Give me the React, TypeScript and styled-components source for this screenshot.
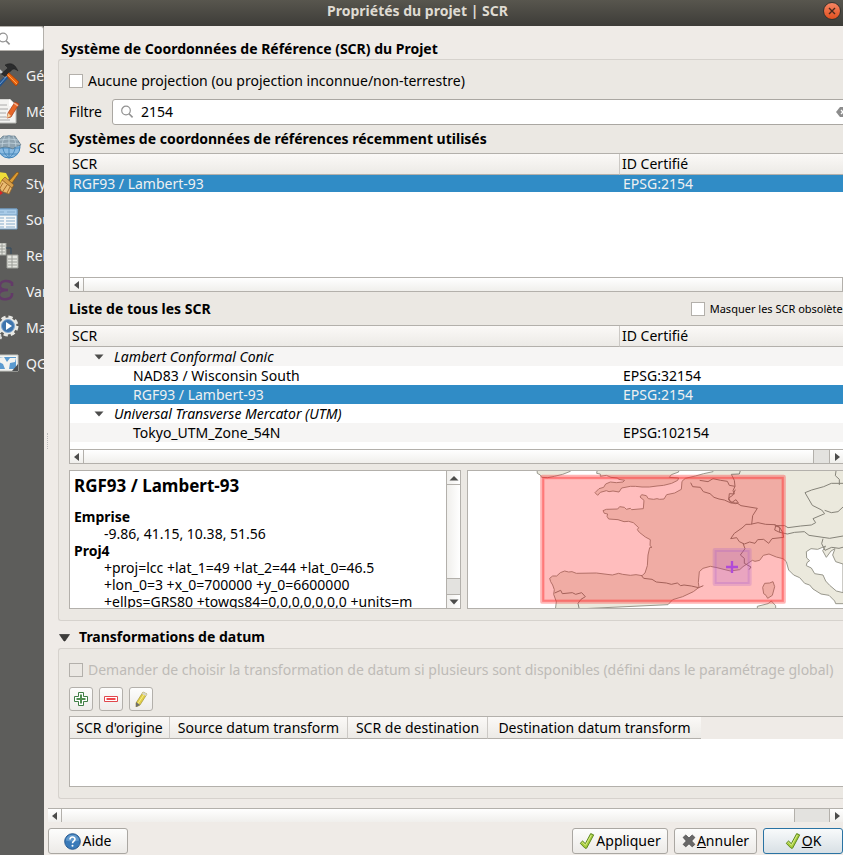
import React from "react";
import styled, { createGlobalStyle, css } from "styled-components";

const line = "#b3b0ab";
const blue = "#308cc6";

const GlobalStyle = createGlobalStyle`
  *, *::before, *::after { box-sizing: border-box; }
  body { margin: 0; }
  body, button, input, table {
    font-family: "Noto Sans", "Open Sans", sans-serif;
    font-size: 14px;
    line-height: 20px;
    color: #000;
  }
  svg { display: block; flex: none; }
`;

const Window = styled.div`
  display: flex;
  flex-direction: column;
  min-height: 100vh;
  background: #efebe7;
  overflow: hidden;
`;

const TitleBar = styled.header`
  display: flex;
  align-items: center;
  height: 26px;
  padding: 0 2px 4px 12px;
  background: linear-gradient(#58564e, #3d3c38);
  color: #dfdbd2;
`;

const WindowTitle = styled.h1`
  flex: 1;
  margin: 0;
  font-size: 14px;
  line-height: 20px;
  text-align: center;
`;

const CloseButton = styled.button`
  display: grid;
  place-items: center;
  width: 18px;
  height: 18px;
  padding: 0;
  border: 1px solid #34332f;
  border-radius: 50%;
  background: linear-gradient(#f58563, #e2501f);
`;

const Body = styled.div`
  display: flex;
  flex: 1;
`;

const Sidebar = styled.nav`
  flex: none;
  width: 44px;
  overflow: hidden;
  background: #5d5d5b;
`;

const SideSearch = styled.label`
  display: flex;
  align-items: center;
  height: 25px;
  margin: 0 0 6px -3px;
  border: 1px solid ${line};
  border-left: 0;
  border-radius: 0 3px 3px 0;
  background: #fff;
`;

const BareInput = styled.input`
  flex: 1;
  min-width: 0;
  padding: 0;
  border: 0;
  outline: 0;
  background: transparent;
  font-size: 14px;
`;

const SideItem = styled.button<{ $active?: boolean }>`
  display: flex;
  align-items: center;
  gap: 4px;
  width: 100%;
  height: 36px;
  padding: 2px 0 0;
  border: 0;
  background: ${(p) => (p.$active ? "#efebe7" : "transparent")};
  color: ${(p) => (p.$active ? "#000" : "#f3f3f3")};
  white-space: nowrap;
  ${(p) => p.$active && css`gap: 7px;`}
`;

const Splitter = styled.div`
  align-self: center;
  flex: none;
  width: 4px;
  height: 16px;
  border-right: 1px dotted #bbb;
`;

const Main = styled.main`
  display: flex;
  flex: 1;
  flex-direction: column;
  min-width: 0;
`;

const ScrollContent = styled.div`
  flex: 1;
  padding-left: 10px;
`;

const SectionTitle = styled.h2<{ $first?: boolean }>`
  display: flex;
  align-items: center;
  gap: 9px;
  margin: 0;
  padding: ${(p) => (p.$first ? "13px 0 0 3px" : "6px 0 1px 1px")};
  font-size: 14px;
  line-height: 20px;
`;

const Group = styled.section`
  display: flex;
  flex-direction: column;
  padding: 11px 0 11px 10px;
  border: 1px solid #d6d2cd;
  border-right: 0;
  border-radius: 3px 0 0 3px;
  background: #ebe8e3;
`;

const CheckLabel = styled.label<{ $disabled?: boolean; $small?: boolean }>`
  display: flex;
  align-items: center;
  gap: 5px;
  overflow: hidden;
  white-space: nowrap;
  color: ${(p) => (p.$disabled ? "#bebbb7" : "#000")};
  ${(p) => p.$small && css`
    margin-right: -5px;
    font-size: 11px;
  `}
`;

const CheckBox = styled.input.attrs({ type: "checkbox" })`
  appearance: none;
  flex: none;
  width: 14px;
  height: 14px;
  margin: 0;
  border: 1px solid ${line};
  background: #fff;
  &:disabled { background: transparent; }
`;

const FilterRow = styled.div`
  display: flex;
  align-items: center;
  gap: 10px;
  margin: 8px 0 4px;
`;

const SearchField = styled.div`
  display: flex;
  flex: 1;
  align-items: center;
  gap: 7px;
  height: 26px;
  margin-right: -6px;
  padding-left: 7px;
  border: 1px solid #aaa7a2;
  border-radius: 3px;
  background: #fff;
`;

const Clear = styled.button`
  padding: 0;
  border: 0;
  background: transparent;
`;

const ListTitle = styled.h3`
  margin: 0;
  font-size: 14px;
  line-height: 20px;
  white-space: nowrap;
`;

const ListHead = styled.div`
  display: flex;
  align-items: center;
  justify-content: space-between;
  padding: 7px 0 6px;
`;

const Pane = styled.div`
  display: flex;
  flex-direction: column;
  min-height: 139px;
  border: 1px solid ${line};
  border-right: 0;
  background: #fff;
`;

const RecentPane = styled(Pane)`
  margin-top: 4px;
`;

const TableArea = styled.div`
  flex: 1;
`;

const Tree = styled.table`
  width: 100%;
  border-collapse: separate;
  border-spacing: 0;
  table-layout: fixed;
  text-align: left;
`;

const HeadCell = styled.th<{ $wide?: boolean }>`
  width: ${(p) => (p.$wide ? "550px" : "auto")};
  height: 21px;
  padding: 0 2px;
  border-right: 1px solid #ccc9c5;
  border-bottom: 1px solid ${line};
  background: linear-gradient(#fbf9f7, #eceae6);
  font-weight: 400;
  line-height: 20px;
  &:last-child { border-right: 0; }
`;

type RowKind = { $selected?: boolean; $alt?: boolean; $compact?: boolean };

const Row = styled.tr<RowKind>`
  height: ${(p) => (p.$compact ? "17px" : "19px")};
  background: ${(p) => (p.$selected ? blue : p.$alt ? "#f6f5f4" : "#fff")};
  color: ${(p) => (p.$selected ? "#eff0f1" : "#000")};
`;

const Cell = styled.td<{ $level?: number }>`
  padding: 0 3px 0 ${(p) => (p.$level === 2 ? "63px" : p.$level === 1 ? "24px" : "3px")};
  line-height: 17px;
  white-space: nowrap;
`;

const Branch = styled.span`
  display: flex;
  align-items: center;
  gap: 10px;
  font-style: italic;
`;

const Bar = styled.div`
  display: flex;
  height: 14px;
  border-top: 1px solid ${line};
  background: linear-gradient(#fff, #f0efec);
`;

const Groove = styled.div<{ $end?: boolean }>`
  flex: 1;
  border-right: ${(p) => (p.$end ? `1px solid ${line}` : "0")};
`;

const Handle = styled.div<{ $wide?: boolean }>`
  width: ${(p) => (p.$wide ? "36px" : "17px")};
  border: solid ${line};
  border-width: 0 1px;
  background: #e3e2df;
`;

const ArrowButton = styled.button<{ $side?: "left" | "up" | "down" }>`
  display: grid;
  place-items: center;
  width: 13px;
  height: 13px;
  padding: 0;
  border: 0 solid ${line};
  background: transparent;
  ${(p) => p.$side === "left" && css`width: 14px; border-right-width: 1px;`}
  ${(p) => p.$side === "up" && css`height: 14px; border-bottom-width: 1px;`}
  ${(p) => p.$side === "down" && css`height: 14px; border-top-width: 1px;`}
`;

const Details = styled.div`
  display: flex;
  gap: 6px;
  height: 139px;
  margin-top: 6px;
`;

const InfoPane = styled.div`
  display: flex;
  flex: 0 0 392px;
  border: 1px solid ${line};
  background: #fff;
  overflow: hidden;
`;

const InfoText = styled.div`
  flex: 1;
  padding: 5px 4px 0;
  overflow: hidden;
  white-space: nowrap;
`;

const InfoTitle = styled.h4`
  margin: 0 0 12px;
  font-size: 17px;
  line-height: 20px;
`;

const Facts = styled.dl`
  margin: 0;
  line-height: 17px;
  dt { font-weight: 700; }
  dd { margin: 0 0 0 30px; }
`;

const VerticalBar = styled.div`
  display: flex;
  flex: none;
  flex-direction: column;
  width: 14px;
  border-left: 1px solid ${line};
  background: linear-gradient(90deg, #f0efec, #fff);
`;

const VerticalHandle = styled.div`
  height: 16px;
  border-top: 1px solid ${line};
  background: #e3e2df;
`;

const MapPane = styled.div`
  flex: 1;
  min-width: 0;
  border: 1px solid ${line};
  border-right: 0;
  background: #fff;
  overflow: hidden;
`;

const Tools = styled.div`
  display: flex;
  gap: 6px;
  margin: 7px 0 5px;
`;

const ToolButton = styled.button`
  display: grid;
  place-items: center;
  width: 24px;
  height: 24px;
  padding: 0;
  border: 1px solid ${line};
  border-radius: 3px;
  background: linear-gradient(#fdfdfc, #eeecea);
`;

const DatumPane = styled.div`
  min-height: 71px;
  border: 1px solid ${line};
  border-right: 0;
  background: linear-gradient(#efebe7 22px, #fff 22px);
`;

const DatumTable = styled.table`
  border-spacing: 0;
  table-layout: fixed;
  width: 631px;
`;

const DatumHead = styled.th<{ $w: number }>`
  width: ${(p) => p.$w}px;
  height: 22px;
  padding: 1px 0 0;
  border-right: 1px solid #ccc9c5;
  border-bottom: 1px solid ${line};
  background: linear-gradient(#fbf9f7, #eceae6);
  font-weight: 400;
  text-align: center;
  white-space: nowrap;
  &:last-child { border-right: 0; }
`;

const BottomBar = styled(Bar)`
  margin: 9px 0 6px;
`;

const Actions = styled.footer`
  display: flex;
  gap: 6px;
  padding-bottom: 1px;
`;

const ActionButton = styled.button<{ $w: number; $primary?: boolean; $first?: boolean }>`
  display: flex;
  align-items: center;
  justify-content: center;
  gap: 1px;
  width: ${(p) => p.$w}px;
  height: 26px;
  margin-right: ${(p) => (p.$first ? "auto" : "0")};
  padding: 0;
  border: 1px solid ${(p) => (p.$primary ? "#2a73a3" : "#aaa7a2")};
  border-radius: 3px;
  background: ${(p) => (p.$primary ? "linear-gradient(#f8fafb, #d8e0e5)" : "linear-gradient(#fdfdfc, #eceae7)")};
`;

const Magnifier = () => (
  <svg width="14" height="14" viewBox="0 0 14 14" fill="none" stroke="#929292" strokeWidth="1.2">
    <circle cx="6" cy="5.5" r="4.3" />
    <path d="M9 8.7 12.6 12.4" strokeWidth="1.6" />
  </svg>
);

const arrows = {
  left: "M7 1v8L2 5z",
  right: "M3 1v8l5-4z",
  up: "M.5 7.500h9L5 3z",
  down: "M.5 2.500h9L5 7.500z",
};

const Arrow = ({ to }: { to: keyof typeof arrows }) => (
  <svg width="10" height="10" viewBox="0 0 10 10"><path d={arrows[to]} fill="#4c4c4b" /></svg>
);

const BigTriangle = () => (
  <svg width="11" height="11" viewBox="0 0 11 11">
    <path d="M.5 2.500h10L6 9H5z" fill="#3e3d3b" stroke="#222" strokeWidth=".6" />
  </svg>
);

const Check = () => (
  <svg width="16" height="18" viewBox="0 0 16 18">
    <path d="M1.2 11.3 3.6 9l2.700 2.700L11.700 1.600l3 1.300L7.600 16.200H6z" fill="#a7cc3b" stroke="#5f8a24" strokeLinejoin="round" />
    <path d="m2.600 11.200 1-.8 2.900 2.900L12.300 3" fill="none" stroke="#d9ee8b" />
  </svg>
);

const CancelMark = () => (
  <svg width="14" height="14" viewBox="0 0 14 14">
    <path d="m3.800 1 3.200 3 3.200-3 2.700 2.400L9.700 7l3.200 3.400-2.700 2.400-3.200-3-3.200 3-2.700-2.400L4.300 7 1.100 3.400z" fill="#686868" stroke="#4c4c4c" strokeWidth=".8" />
  </svg>
);

const HelpMark = () => (
  <svg width="17" height="17" viewBox="0 0 17 17">
    <circle cx="8.5" cy="8.5" r="7.8" fill="#397ab9" stroke="#27598f" />
    <path d="M1.800 7.500a6.800 6.800 0 0 1 13.400 0q-6.500 2-13.400 0" fill="#83b3dd" opacity=".55" />
    <path d="M6 6.500C6 3.200 11 3.200 11 6.200 11 8.200 8.500 8 8.500 10.300" fill="none" stroke="#fff" strokeWidth="1.600" />
    <circle cx="8.500" cy="12.800" r="1" fill="#fff" />
  </svg>
);

const sideIcons: Record<string, React.ReactNode> = {
  general: (
    <>
      <path d="m0 21 9-9 3 2-9 10H0z" fill="#24548e" />
      <path d="m0 5 9 9" stroke="#c8cdd0" strokeWidth="2.500" />
      <path d="m2 22 9-10" stroke="#6f9ed0" />
      <path d="m8 11 3-2 11 10-3 4z" fill="#e96410" stroke="#a63c00" strokeWidth=".7" />
      <path d="m10 11 10 10" stroke="#ffa34f" />
      <path d="m4 11 7-6-3-3c6-3 10-1 13 6-4-3-6-2-7 0l-2 1-4 5z" fill="#2b2c2d" stroke="#111" strokeWidth=".4" />
    </>
  ),
  metadata: (
    <>
      <path d="M0 0h13l6 6v18H0z" fill="#f3f3f1" stroke="#b9b9b5" />
      <path d="M0 6h10M0 10h11M0 14h9M0 18h9M0 21h13" stroke="#aaa" />
      <path d="m12 0 7 7h-7z" fill="#fff" />
      <path d="m18 3 4 2-8 13-4 1 1-5z" fill="#e76728" stroke="#a53a17" strokeWidth=".7" />
      <path d="m10 19 1-5 3 3z" fill="#f2d6a5" /><path d="m17 4 4 3" stroke="#efb294" strokeWidth="1.500" />
    </>
  ),
  crs: (
    <>
      <circle cx="12" cy="12" r="11" fill="#8bbbe2" stroke="#3f82b9" />
      <path d="M1 13h22M4 19h16M12 2v21M12 2c-8 7-8 14 0 21M12 2c8 7 8 14 0 21" fill="none" stroke="#4786b9" />
      <path d="M6 1h12l6 9q-6 1-8 4-8-4-15 0V6z" fill="#8fa3b0" stroke="#577080" strokeWidth=".6" />
      <path d="M3 5q9-2 18 0M1 9q11-2 22 0M8 1Q5 6 5 12M16 1q3 5 3 11M12 1v11" fill="none" stroke="#c1d3dd" strokeWidth=".8" />
    </>
  ),
  styles: (
    <>
      <path d="m0 1 9 1 3 6-8 6-4-2z" fill="#efdd39" /><path d="m0 17 6 5-3 2H0z" fill="#dc2525" />
      <path d="m12 10 8-9 2 1-7 10z" fill="#dc9c33" stroke="#85500f" strokeWidth=".7" />
      <path d="m8 6 9 8-2 3-10-8z" fill="#d8a04b" stroke="#805015" strokeWidth=".6" />
      <path d="m5 9 10 8-3 6-8-3-2-5z" fill="#eabb72" stroke="#9a6422" strokeWidth=".7" />
      <path d="m6 12-3 5m7-3-4 6m7-4-3 6" stroke="#a76b28" />
    </>
  ),
  sources: (
    <>
      <path d="M0 2h20v20H0z" fill="#f4f6f7" stroke="#739fc5" />
      <path d="M0 2h20v6H0z" fill="#a9cbe8" stroke="#739fc5" />
      <path d="M1 5h6m3 0h8M0 11h7m2 0h9M0 14h7m2 0h9M0 17h7m2 0h9M0 20h7m2 0h9" stroke="#86abcc" strokeWidth="1.200" />
    </>
  ),
  relations: (
    <>
      <path d="M0 0h9v12H0zM10 12h11v13H10z" fill="#e4e5df" stroke="#9c9e98" />
      <path d="M0 3h8M0 6h8M0 9h8M11 16h9m-9 3h9m-9 3h9M5 0v12m10 0v13" stroke="#9c9e98" />
      <path d="M9 5h5v6" fill="none" stroke="#324c62" />
    </>
  ),
  variables: <path d="M15 7V4c-3-3-11-3-12 2-1 4 3 5 8 5-6 0-10 2-9 6 2 5 12 4 13-1v-2" fill="none" stroke="#633a68" strokeWidth="2.600" />,
  macros: (
    <>
      <circle cx="11" cy="11" r="8.500" fill="#e8e8e4" stroke="#e8e8e4" strokeWidth="4" strokeDasharray="4 2.700" />
      <circle cx="11" cy="11" r="6.500" fill="#3e74ac" stroke="#83a9d2" /><path d="m9 7 6 4-6 4z" fill="#fff" />
      <circle cx="1" cy="22" r="3" fill="#ddd" stroke="#ddd" strokeWidth="2" strokeDasharray="2 1" />
    </>
  ),
  server: (
    <>
      <path d="M0 4h21v16H0z" fill="#f3f4f1" stroke="#c5c7c2" />
      <path d="M0 6h19v12H0z" fill="#5b9bd0" />
      <path d="m0 7 7-1 3 5 3-4 6 0-1 4-5 1-1 6H8l-2-5-6-3z" fill="#f3f4f1" />
      <path d="m21 13-6 7h6z" fill="#4d5052" />
    </>
  ),
};

const SideIcon = ({ name }: { name: string }) => (
  <svg width="22" height="26" viewBox="3 0 22 26">{sideIcons[name]}</svg>
);

const sections = [
  ["general", "Général"], ["metadata", "Métadonnées"], ["crs", "SCR"], ["styles", "Styles"],
  ["sources", "Sources"], ["relations", "Relations"], ["variables", "Variables"],
  ["macros", "Macros"], ["server", "QGIS Server"],
];

const ExtentMap = () => (
  <svg width="100%" height="100%" viewBox="15 33 1125 411" preserveAspectRatio="xMinYMin slice" role="img" aria-label="Emprise">
    <g fill="#ebe9dd" stroke="#98978c" strokeWidth="3" strokeLinejoin="round">
      <path d="M222 28l1 12 9 5 4 7 18 1 20-4 25-6 23-9V28z" />
      <path d="M403 28l-2 12 11 2 0 7 18-3 14 6 20 2 3 4 18 3-5 5-20 2-18-2-14 6-6 10-14 4-12 12 8 8 8-9 18-5 8 3 12-2 18 3 8-12 26-5 15 0 20 2 22 0 23-3 20-2 24-6 18-9 3-7-28-2 6-8 22-8V28z" />
      <path d="M277 450l3-25-8-22 2-14-5-14-6-10-3-10 9-7 12 0 11-10 13-5 12 3 10-1 13 5 60-1 48 6 19-5 12 3 23 3 17-2 18 3 9-8 7-22 2-32 5-22 7-1-6-5 1-18-15-8-18-14-6-8 4-6-16-15-14-4-14 1-18-6-28-2-5-8 2-7-10-2-4-8 10-4 34-1 6-7 14 2 6 6 12-3 4 4 35-3 2-25-12-10 5-7 14 3 6 9 16 2 10-2 8 2 13-1 8-13 24-5 20-11 2-24 10-9 30-7 25-7 28-6-1-18 8-6h402v420H1118l-3-8-17-17-24-4-24-15-10-12-15-5-15-17-18-8-15-15-7-25-10-9-20-5-22-9-17 4-11 15-14 3-8-3-28 19-10 9-28 4-40-10-20-4-22 6-11 10-3 32 2 15-17 13-32 15-30 9-14 15z" />
      <path d="M1030 275l14-9 20 2 24-10-9 14 11 20 14-19 12-7-7 19 9 20 22 7v86l-20-5-20-17-12-13-8-18-25-4-10-17-15-7 2-9 8-6-9-8z" fill="#fff" />
      <path d="M899 382l6-12 15-1 10-4 5 15-7 26-14 9-5-9-7-5z" /><path d="M883 450v-11l32-8 10-8 13 14v13z" />
    </g>
    <g fill="none" stroke="#858379" strokeWidth="3" strokeLinejoin="round">
      <path d="M275 399l18-8 5 10 30-3 10 5 18-5 11 12-13 8-9 12 3 14M535 346l7 9 25 3 13 8 30 3 15 4 18-4 10 8 10-2 22 3 22 5 14-6M683 68l6 12 23 2 9 13 20 6 12 11 15 5 16 3 20 9 18 0 12 8 49 8-14 22-3 26" />
      <path d="M862 193l23-5 23 5 28 1 14 8 9 15 3 15-35 4-10 14-15-12-18 1-8 11-16-4-16 6-15-7-8-12-18 3 11-16 23-16 12-11zM710 61l25 4 15-9 23 5 20 3 6 12 17 3-6 13 4 10-15-1-2 19 10 7 12-8 7 10-8 2-16-5-5-12 12-8 8-17M816 79l-2-18-9-18 24-1 4-14" />
      <path d="M935 197l30 0 10 6 38-5 32-3 13-7-8-12 35-15-9-11-28-14-22-38 20-8 36-10 23-10h40M1085 151l20 7 20-3 15-14M950 217l23 5 22-5 29-2 14 11 62 9 40-7M1080 236l-4 15 10 20 20-9 22 3 18-5M1120 26l-3 21 12 11v17M840 250l6 16-14 19 12 10 0 15 20 11-6 8M935 210l3-12 12 4 0 15z" />
    </g>
    <rect x="238" y="51" width="724" height="374" fill="#f00" fillOpacity=".26" />
    <rect x="238" y="51" width="724" height="374" fill="none" stroke="#f33" strokeOpacity=".36" strokeWidth="13" strokeLinejoin="round" />
    <rect x="240" y="53" width="720" height="370" fill="none" stroke="#f33" strokeOpacity=".2" strokeWidth="6" />
    <rect x="755" y="270" width="105" height="102" fill="#a050cf" fillOpacity=".22" />
    <rect x="755" y="270" width="105" height="102" fill="none" stroke="#a050cf" strokeOpacity=".22" strokeWidth="12" strokeLinejoin="round" />
    <path d="M807 303v36M789 321h36" stroke="#b04bd8" strokeWidth="7" />
  </svg>
);

type HBarProps = { kind: "recent" | "list" };
const HorizontalBar = ({ kind }: HBarProps) => (
  <Bar>
    <ArrowButton $side="left" aria-label="Défiler à gauche"><Arrow to="left" /></ArrowButton>
    <Groove $end={kind === "recent"} />
    {kind === "list" && (
      <>
        <Handle />
        <ArrowButton aria-label="Défiler à droite"><Arrow to="right" /></ArrowButton>
      </>
    )}
  </Bar>
);

const TreeHead = () => (
  <thead><tr><HeadCell $wide>SCR</HeadCell><HeadCell>ID Certifié</HeadCell></tr></thead>
);

const crsRows = [
  { name: "Lambert Conformal Conic", branch: true, alt: true },
  { name: "NAD83 / Wisconsin South", id: "EPSG:32154" },
  { name: "RGF93 / Lambert-93", id: "EPSG:2154", selected: true },
  { name: "Universal Transverse Mercator (UTM)", branch: true },
  { name: "Tokyo_UTM_Zone_54N", id: "EPSG:102154", alt: true },
];

export default function App() {
  return (
    <Window>
      <GlobalStyle />
      <TitleBar>
        <WindowTitle>Propriétés du projet | SCR</WindowTitle>
        <CloseButton aria-label="Fermer">
          <svg width="8" height="8" viewBox="0 0 8 8"><path d="m1 1 6 6m0-6L1 7" stroke="#47291d" strokeWidth="1.400" /></svg>
        </CloseButton>
      </TitleBar>
      <Body>
        <Sidebar>
          <SideSearch><Magnifier /><BareInput aria-label="Rechercher" /></SideSearch>
          {sections.map(([icon, label]) => (
            <SideItem key={icon} $active={icon === "crs"}><SideIcon name={icon} />{label}</SideItem>
          ))}
        </Sidebar>
        <Splitter />
        <Main>
          <ScrollContent>
            <SectionTitle $first>Système de Coordonnées de Référence (SCR) du Projet</SectionTitle>
            <Group>
              <CheckLabel><CheckBox />Aucune projection (ou projection inconnue/non-terrestre)</CheckLabel>
              <FilterRow>
                <label htmlFor="filter">Filtre</label>
                <SearchField>
                  <Magnifier />
                  <BareInput id="filter" defaultValue="2154" />
                  <Clear aria-label="Effacer">
                    <svg width="12" height="12" viewBox="0 0 12 12">
                      <path d="M0 6 4 1h8v10H4z" fill="#8c8c8c" /><path d="m5 4 4 4m0-4L5 8" stroke="#fff" strokeWidth="1.300" />
                    </svg>
                  </Clear>
                </SearchField>
              </FilterRow>
              <ListTitle>Systèmes de coordonnées de références récemment utilisés</ListTitle>
              <RecentPane>
                <TableArea>
                  <Tree>
                    <TreeHead />
                    <tbody>
                      <Row $selected $compact><Cell>RGF93 / Lambert-93</Cell><Cell>EPSG:2154</Cell></Row>
                    </tbody>
                  </Tree>
                </TableArea>
                <HorizontalBar kind="recent" />
              </RecentPane>
              <ListHead>
                <ListTitle>Liste de tous les SCR</ListTitle>
                <CheckLabel $small><CheckBox />Masquer les SCR obsolètes</CheckLabel>
              </ListHead>
              <Pane>
                <TableArea>
                  <Tree>
                    <TreeHead />
                    <tbody>
                      {crsRows.map((r) => (
                        <Row key={r.name} $selected={r.selected} $alt={r.alt}>
                          <Cell $level={r.branch ? 1 : 2}>
                            {r.branch ? <Branch><Arrow to="down" />{r.name}</Branch> : r.name}
                          </Cell>
                          <Cell>{r.id}</Cell>
                        </Row>
                      ))}
                    </tbody>
                  </Tree>
                </TableArea>
                <HorizontalBar kind="list" />
              </Pane>
              <Details>
                <InfoPane>
                  <InfoText>
                    <InfoTitle>RGF93 / Lambert-93</InfoTitle>
                    <Facts>
                      <dt>Emprise</dt>
                      <dd>-9.86, 41.15, 10.38, 51.56</dd>
                      <dt>Proj4</dt>
                      <dd>
                        +proj=lcc +lat_1=49 +lat_2=44 +lat_0=46.5<br />
                        +lon_0=3 +x_0=700000 +y_0=6600000<br />
                        +ellps=GRS80 +towgs84=0,0,0,0,0,0,0 +units=m
                      </dd>
                    </Facts>
                  </InfoText>
                  <VerticalBar>
                    <ArrowButton $side="up" aria-label="Défiler vers le haut"><Arrow to="up" /></ArrowButton>
                    <TableArea />
                    <VerticalHandle />
                    <ArrowButton $side="down" aria-label="Défiler vers le bas"><Arrow to="down" /></ArrowButton>
                  </VerticalBar>
                </InfoPane>
                <MapPane><ExtentMap /></MapPane>
              </Details>
            </Group>
            <SectionTitle><BigTriangle />Transformations de datum</SectionTitle>
            <Group>
              <CheckLabel $disabled>
                <CheckBox disabled />
                Demander de choisir la transformation de datum si plusieurs sont disponibles (défini dans le paramétrage global)
              </CheckLabel>
              <Tools>
                <ToolButton aria-label="Ajouter">
                  <svg width="16" height="16" viewBox="0 0 16 16">
                    <path d="M5.500 1.500h5v4h4v5h-4v4h-5v-4h-4v-5h4z" fill="#fff" stroke="#3f7d45" />
                    <path d="M8 3.500v9M3.500 8h9" stroke="#4f8c50" strokeWidth="2" />
                  </svg>
                </ToolButton>
                <ToolButton aria-label="Supprimer">
                  <svg width="16" height="16" viewBox="0 0 16 16">
                    <path d="M1.500 5.500h13v5h-13z" fill="#fff" stroke="#e0474c" /><path d="M3.500 8h9" stroke="#f0474c" strokeWidth="2" />
                  </svg>
                </ToolButton>
                <ToolButton aria-label="Modifier">
                  <svg width="16" height="16" viewBox="0 0 16 16">
                    <path d="m10 1 4 2-7 11-4 2 0-4z" fill="#e2cf45" stroke="#a3943c" strokeWidth=".7" />
                    <path d="m12 2-8 12" stroke="#f7ed93" /><path d="m3 11 4 3-4 2z" fill="#6d6d6d" /><path d="m10 1 4 2-1 2-4-2z" fill="#d5d5d0" />
                  </svg>
                </ToolButton>
              </Tools>
              <DatumPane>
                <DatumTable>
                  <thead>
                    <tr>
                      <DatumHead $w={100}>SCR d'origine</DatumHead>
                      <DatumHead $w={178}>Source datum transform</DatumHead>
                      <DatumHead $w={140}>SCR de destination</DatumHead>
                      <DatumHead $w={213}>Destination datum transform</DatumHead>
                    </tr>
                  </thead>
                </DatumTable>
              </DatumPane>
            </Group>
          </ScrollContent>
          <BottomBar>
            <ArrowButton $side="left" aria-label="Défiler à gauche"><Arrow to="left" /></ArrowButton>
            <Groove />
            <Handle $wide />
            <ArrowButton aria-label="Défiler à droite"><Arrow to="right" /></ArrowButton>
          </BottomBar>
          <Actions>
            <ActionButton $w={80} $first><HelpMark />Aide</ActionButton>
            <ActionButton $w={96}><Check />Appliquer</ActionButton>
            <ActionButton $w={83}><CancelMark /><span><u>A</u>nnuler</span></ActionButton>
            <ActionButton $w={80} $primary><Check /><span><u>O</u>K</span></ActionButton>
          </Actions>
        </Main>
      </Body>
    </Window>
  );
}
